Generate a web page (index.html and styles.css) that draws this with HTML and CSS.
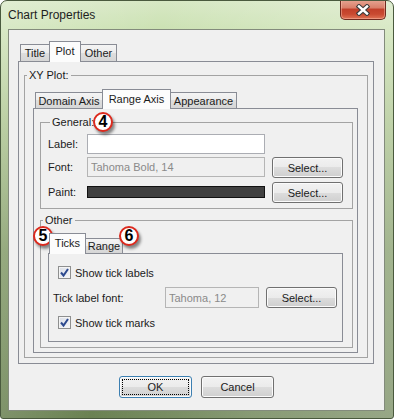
FILE: index.html
```html
<!DOCTYPE html>
<html lang="en">
<head>
  <meta charset="UTF-8">
  <title>Chart Properties</title>
  <link rel="stylesheet" href="styles.css">
</head>
<body>
  <div class="window">
    <div class="titlebar">
      <span class="title">Chart Properties</span>
      <button class="close" aria-label="Close">
        <svg width="14" height="12" viewBox="0 0 14 12">
          <path d="M3 2.5 L11 9.5 M11 2.5 L3 9.5" stroke="#3c3c3c" stroke-width="4.6" stroke-linecap="square"/>
          <path d="M3 2.5 L11 9.5 M11 2.5 L3 9.5" stroke="#ffffff" stroke-width="2.4" stroke-linecap="square"/>
        </svg>
      </button>
    </div>

    <div class="client">
      <div class="tabs outer-tabs">
        <div class="tab">Title</div>
        <div class="tab active">Plot</div>
        <div class="tab">Other</div>
      </div>
      <div class="tab-panel outer-panel">
        <fieldset class="group xy">
          <legend>XY Plot:</legend>
          <div class="tabs inner-tabs">
            <div class="tab">Domain Axis</div>
            <div class="tab active">Range Axis</div>
            <div class="tab">Appearance</div>
          </div>
          <div class="tab-panel inner-panel">
            <fieldset class="group general">
              <legend>General:</legend>
              <div class="form-grid">
                <span class="lbl">Label:</span>
                <input class="field" type="text">
                <span></span>

                <span class="lbl">Font:</span>
                <input class="field" type="text" value="Tahoma Bold, 14" disabled>
                <button class="btn">Select...</button>

                <span class="lbl lbl-paint">Paint:</span>
                <div class="paint"></div>
                <button class="btn">Select...</button>
              </div>
            </fieldset>

            <fieldset class="group other">
              <legend>Other</legend>
              <div class="tabs ticks-tabs">
                <div class="tab active">Ticks</div>
                <div class="tab">Range</div>
              </div>
              <div class="tab-panel ticks-panel">
                <label class="row check-row">
                  <span class="check">
                    <svg width="11" height="11" viewBox="0 0 11 11"><path d="M2 5.5 L4.5 8.5 L9 2" fill="none" stroke="#2d4a8f" stroke-width="2"/></svg>
                  </span>
                  Show tick labels
                </label>
                <div class="row">
                  <span class="row-lbl">Tick label font:</span>
                  <input class="field small" type="text" value="Tahoma, 12" disabled>
                  <button class="btn">Select...</button>
                </div>
                <label class="row check-row">
                  <span class="check">
                    <svg width="11" height="11" viewBox="0 0 11 11"><path d="M2 5.5 L4.5 8.5 L9 2" fill="none" stroke="#2d4a8f" stroke-width="2"/></svg>
                  </span>
                  Show tick marks
                </label>
              </div>
            </fieldset>
          </div>
        </fieldset>
      </div>

      <div class="actions">
        <button class="btn wide default">OK</button>
        <button class="btn wide">Cancel</button>
      </div>
    </div>

    <!-- numbered callouts drawn over the dialog -->
    <span class="callout c4">4</span>
    <span class="callout c5">5</span>
    <span class="callout c6">6</span>
  </div>
</body>
</html>
```

FILE: styles.css
```css
:root {
  --face: #f0f0f0;
  --tab-line: #898c95;
  --group-line: #a3a3a3;
  --text: #1b1b1b;
  --muted: #8a8a8a;
  --font: "Liberation Sans", Arial, sans-serif;
}

* {
  box-sizing: border-box;
}

body {
  margin: 0;
  font-family: var(--font);
  font-size: 11px;
  color: var(--text);
}

.window {
  position: relative;
  width: 394px;
  height: 419px;
  border: 1px solid #4a5a3e;
  border-radius: 7px 7px 3px 3px;
  overflow: hidden;
  background:
    linear-gradient(100deg, rgba(255,255,255,0.25) 0, rgba(255,255,255,0) 35%, rgba(255,255,255,0.2) 70%, rgba(255,255,255,0.3) 100%),
    linear-gradient(#d7e8c4 0, #cbe1b2 30px, #aac38c 120px, #7f9864 250px, #6a8152 100%);
}

.titlebar {
  display: flex;
  align-items: flex-start;
  height: 28px;
}

.title {
  margin-left: 7px;
  line-height: 28px;
  font-size: 12px;
  color: #1e1e1e;
}

.close {
  margin-left: auto;
  margin-right: 7px;
  margin-top: -1px;
  width: 46px;
  height: 20px;
  padding: 0;
  border: 1px solid #6e2a1f;
  border-top: none;
  border-radius: 0 0 5px 5px;
  background: linear-gradient(#e6a593 0, #d9806b 40%, #c2402a 50%, #c94a31 75%, #e07356 100%);
  box-shadow: inset 0 0 0 1px rgba(255, 200, 180, 0.45);
  display: flex;
  align-items: center;
  justify-content: center;
}

.client {
  margin-left: 7px;
  width: 377px;
  height: 382px;
  border: 1px solid #838b7c;
  background: var(--face);
}

/* tabs */
.tabs {
  display: flex;
  align-items: flex-end;
}

.tab {
  position: relative;
  display: flex;
  align-items: center;
  justify-content: center;
  margin-right: -1px;
  border: 1px solid var(--tab-line);
  border-bottom: none;
  background: linear-gradient(#f4f4f4 0, #ececec 50%, #dedede 50%, #d6d6d6 100%);
  white-space: nowrap;
}

.tab.active {
  z-index: 1;
  margin-bottom: -1px;
  padding-bottom: 2px;
  background: #fcfcfc;
}

.tab-panel {
  border: 1px solid var(--tab-line);
  background: var(--face);
}

.outer-tabs {
  height: 20px;
  margin: 11px 0 0 11px;
}
.outer-tabs .tab { height: 17px; width: 30px; }
.outer-tabs .tab:nth-child(2) { width: 32px; }
.outer-tabs .tab:nth-child(3) { width: 37px; }
.outer-tabs .tab.active { height: 21px; }

.outer-panel {
  margin: 0 10px 0 9px;
  padding: 7px 5px 5px;
}

.inner-tabs {
  height: 19px;
  margin-left: 10px;
}
.inner-tabs .tab { height: 16px; width: 68px; }
.inner-tabs .tab:nth-child(2) { width: 69px; }
.inner-tabs .tab:nth-child(3) { width: 67px; }
.inner-tabs .tab.active { height: 20px; }

.inner-panel {
  margin: 0 9px 4px 8px;
  padding: 7px 4px 4px 6px;
}

.ticks-tabs {
  height: 20px;
  margin-left: 8px;
}
.ticks-tabs .tab { height: 15px; width: 38px; }
.ticks-tabs .tab.active { height: 21px; width: 37px; }

.ticks-panel {
  margin: 0 9px 5px 7px;
  padding: 6px 4px;
}

/* titled groups */
.group {
  margin: 0;
  padding: 0;
  min-width: 0;
  border: 1px solid var(--group-line);
}

.group legend {
  margin-left: 2px;
  padding: 0 2px;
  line-height: 13px;
  font-size: 11px;
}

.xy .inner-tabs {
  margin-top: 7px;
}

.general {
  padding: 5px 9px 5px 7px;
}

.other {
  margin-top: 5px;
}

.other .ticks-tabs {
  margin-top: 6px;
}

.form-grid {
  display: grid;
  grid-template-columns: 32px 1fr 71px;
  grid-template-rows: 23px 25px 21px;
  column-gap: 7px;
}

.form-grid > * {
  align-self: start;
}

.lbl {
  line-height: 20px;
}

.lbl-paint {
  line-height: 21px;
}

.field {
  height: 20px;
  width: 100%;
  padding: 0 3px;
  border: 1px solid #abadb3;
  background: #fff;
  font-family: var(--font);
  font-size: 11px;
  color: var(--text);
}

.field:disabled {
  background: var(--face);
  border-color: #b5b5b5;
  color: var(--muted);
}

.field.small {
  width: 94px;
  height: 21px;
}

.paint {
  margin-top: 4px;
  height: 12px;
  border: 1px solid #111;
  background: #404040;
}

.btn {
  height: 21px;
  padding: 0;
  border: 1px solid #707070;
  border-radius: 3px;
  background: linear-gradient(#f2f2f2 0, #ebebeb 50%, #dddddd 50%, #cfcfcf 100%);
  box-shadow: inset 0 0 0 1px #fbfbfb;
  font-family: var(--font);
  font-size: 11px;
  color: var(--text);
}

/* tick options */
.row {
  display: flex;
  align-items: center;
  height: 25px;
}

.check-row {
  padding-left: 5px;
  gap: 4px;
}

.check {
  display: flex;
  align-items: center;
  justify-content: center;
  width: 13px;
  height: 13px;
  border: 1px solid #8e8f8f;
  background: linear-gradient(135deg, #d9dde6 0, #f6f7fa 100%);
  box-shadow: inset 0 0 0 1px #f4f4f4;
}

.row-lbl {
  width: 112px;
}

.row .btn {
  width: 71px;
  margin-left: 7px;
}

.general .btn {
  width: 71px;
}

/* dialog buttons */
.actions {
  display: flex;
  justify-content: center;
  gap: 9px;
  margin-top: 12px;
}

.btn.wide {
  width: 73px;
  height: 22px;
}

.btn.default {
  border-color: #3c7fb1;
  outline: 1px dotted #000;
  outline-offset: -4px;
}

/* callout markers */
.callout {
  position: absolute;
  width: 20px;
  height: 20px;
  border: 2px solid #dc2a1e;
  border-radius: 50%;
  background: #fff;
  box-shadow: 2px 3px 3px rgba(0, 0, 0, 0.45);
  font-weight: bold;
  font-size: 16px;
  line-height: 16px;
  text-align: center;
  color: #000;
}

.c4 { left: 92px; top: 111px; }
.c5 { left: 32px; top: 225px; }
.c6 { left: 118px; top: 225px; }
```
